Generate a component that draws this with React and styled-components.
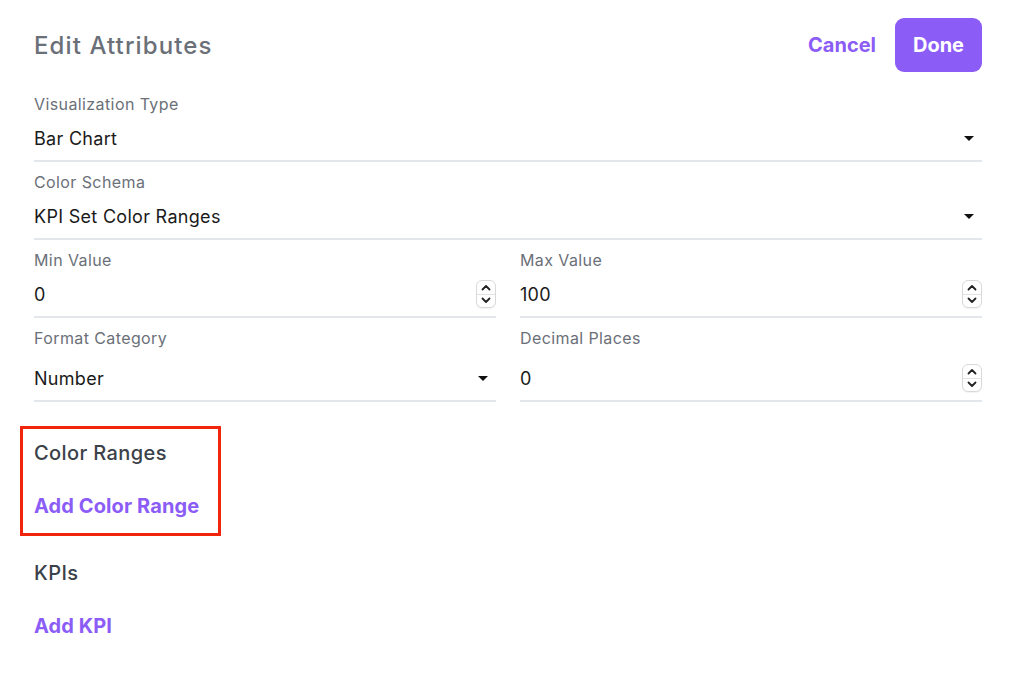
import React from "react";
import styled, { createGlobalStyle } from "styled-components";

const Global = createGlobalStyle`
  html, body { margin: 0; padding: 0; background: #fff; }
  body { font-family: Inter, "Noto Sans", sans-serif; -webkit-font-smoothing: antialiased; }
  * { box-sizing: border-box; }
`;

const Page = styled.div`
  width: 1016px;
  height: 686px;
  padding: 18px 34px 0 34px;
  background: #fff;
  overflow: hidden;
`;

const Header = styled.div`
  display: flex;
  align-items: center;
  justify-content: space-between;
  height: 54px;
  margin-bottom: 22px;
`;

const Title = styled.h1`
  margin: 0;
  font-size: 24px;
  font-weight: 500;
  color: #6b7078;
  letter-spacing: 1.1px;
`;

const Actions = styled.div`
  display: flex;
  align-items: center;
  gap: 19px;
`;

const TextButton = styled.button`
  border: none;
  background: none;
  padding: 0;
  font-family: inherit;
  font-size: 20px;
  font-weight: 700;
  color: #8b5cf6;
  cursor: pointer;
`;

const PrimaryButton = styled.button`
  border: none;
  background: #8b5cf6;
  color: #fff;
  font-family: inherit;
  font-size: 20px;
  font-weight: 700;
  width: 87px;
  height: 54px;
  border-radius: 9px;
  cursor: pointer;
`;

const Row = styled.div`
  display: grid;
  grid-template-columns: 1fr 1fr;
  column-gap: 24px;
  margin-top: 10px;
`;

const Field = styled.div`
  display: flex;
  flex-direction: column;
  margin-top: ${(p) => (p.$first ? 0 : 10)}px;
`;

const Label = styled.div`
  font-size: 16px;
  line-height: 20px;
  color: #6b7078;
  letter-spacing: 0.4px;
  margin-bottom: ${(p) => (p.$spaced ? 6 : 0)}px;
`;

const Control = styled.div`
  display: flex;
  align-items: center;
  justify-content: space-between;
  height: 48px;
  border-bottom: 2px solid #e3e6ea;
  padding-top: 2px;
`;

const Value = styled.span`
  font-size: 18px;
  letter-spacing: 0.3px;
  color: #1a1a1a;
`;

const Caret = styled.span`
  width: 0;
  height: 0;
  border-left: 5px solid transparent;
  border-right: 5px solid transparent;
  border-top: 5px solid #111;
  margin-right: 8px;
`;

const Spinner = styled.span`
  display: flex;
  flex-direction: column;
  width: 20px;
  height: 28px;
  border: 1px solid #d9d9d9;
  border-radius: 6px;
  overflow: hidden;
  background: #fff;
  box-shadow: 0 1px 1px rgba(0,0,0,0.05);
  & > span {
    flex: 1;
    display: flex;
    align-items: center;
    justify-content: center;
  }
  & > span + span { border-top: 1px solid #e2e2e2; }
`;

const Section = styled.div`
  display: flex;
  flex-direction: column;
  gap: 29px;
`;

const Highlight = styled.div`
  width: 201px;
  margin: 24px 0 0 -14px;
  padding: 12px 0 15px 11px;
  border: 3px solid #f1250c;
`;

const Plain = styled(Section)`
  margin-top: 25px;
`;

const Heading = styled.div`
  font-size: 20px;
  line-height: 24px;
  font-weight: 500;
  letter-spacing: 0.4px;
  color: #3b4149;
`;

const LinkButton = styled.button`
  border: none;
  background: none;
  padding: 0;
  text-align: left;
  font-family: inherit;
  font-size: 20px;
  line-height: 24px;
  font-weight: 700;
  letter-spacing: 0.1px;
  color: #8b5cf6;
  cursor: pointer;
`;

const Chevron = ({ up }) => (
  <svg width="10" height="7" viewBox="0 0 10 7">
    <path
      d={up ? "M1.5 5.5 L5 2 L8.5 5.5" : "M1.5 1.5 L5 5 L8.5 1.5"}
      fill="none"
      stroke="#222"
      strokeWidth="1.8"
      strokeLinecap="round"
      strokeLinejoin="round"
    />
  </svg>
);

const NumberSpinner = () => (
  <Spinner>
    <span><Chevron up /></span>
    <span><Chevron /></span>
  </Spinner>
);

const SelectField = ({ label, value, first }) => (
  <Field $first={first}>
    <Label>{label}</Label>
    <Control>
      <Value>{value}</Value>
      <Caret />
    </Control>
  </Field>
);

const NumberField = ({ label, value, spaced }) => (
  <Field $first>
    <Label $spaced={spaced}>{label}</Label>
    <Control>
      <Value>{value}</Value>
      <NumberSpinner />
    </Control>
  </Field>
);

export default function App() {
  return (
    <>
      <Global />
      <Page>
        <Header>
          <Title>Edit Attributes</Title>
          <Actions>
            <TextButton>Cancel</TextButton>
            <PrimaryButton>Done</PrimaryButton>
          </Actions>
        </Header>

        <SelectField first label="Visualization Type" value="Bar Chart" />
        <SelectField label="Color Schema" value="KPI Set Color Ranges" />

        <Row>
          <NumberField label="Min Value" value="0" />
          <NumberField label="Max Value" value="100" />
        </Row>

        <Row>
          <Field $first>
            <Label $spaced>Format Category</Label>
            <Control>
              <Value>Number</Value>
              <Caret />
            </Control>
          </Field>
          <NumberField spaced label="Decimal Places" value="0" />
        </Row>

        <Highlight>
          <Section>
            <Heading>Color Ranges</Heading>
            <LinkButton>Add Color Range</LinkButton>
          </Section>
        </Highlight>

        <Plain>
          <Heading>KPIs</Heading>
          <LinkButton>Add KPI</LinkButton>
        </Plain>
      </Page>
    </>
  );
}
